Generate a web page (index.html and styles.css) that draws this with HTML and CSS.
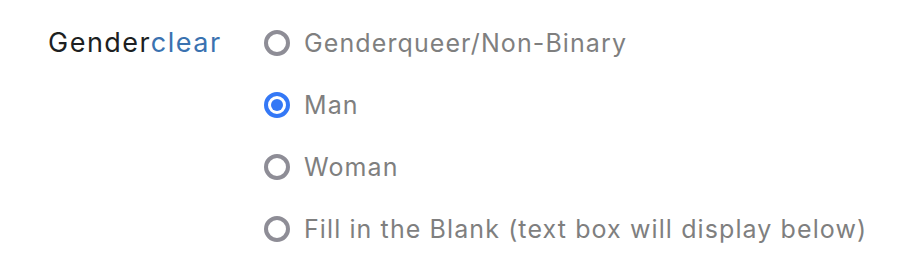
FILE: index.html
```html
<!DOCTYPE html>
<html lang="en">
<head>
    <meta charset="UTF-8">
    <title>Gender</title>
    <link rel="stylesheet" href="styles.css">
</head>
<body>

    <div class="field">
        <div class="field-label">Gender<a class="clear-link" href="#">clear</a></div>
        <div class="options">
            <label class="option">
                <input type="radio" name="gender" value="nb">
                <span class="radio"></span>
                <span class="option-text">Genderqueer/Non-Binary</span>
            </label>
            <label class="option">
                <input type="radio" name="gender" value="man" checked>
                <span class="radio"></span>
                <span class="option-text">Man</span>
            </label>
            <label class="option">
                <input type="radio" name="gender" value="woman">
                <span class="radio"></span>
                <span class="option-text">Woman</span>
            </label>
            <label class="option">
                <input type="radio" name="gender" value="other">
                <span class="radio"></span>
                <span class="option-text">Fill in the Blank (text box will display below)</span>
            </label>
        </div>
    </div>

</body>
</html>
```

FILE: styles.css
```css
body {
    margin: 0;
    padding: 0;
    font-family: Inter, 'Noto Sans', sans-serif;
    background-color: #ffffff;
    color: #1d1d1f;
}

.field {
    display: flex;
    align-items: flex-start;
    padding: 27px 0 0 48px;
}

.field-label {
    font-size: 27px;
    line-height: 32px;
    letter-spacing: 1.5px;
    width: 216px;
    color: #1d1f22;
}

.clear-link {
    color: #3a72b0;
    text-decoration: none;
}

.options {
    display: flex;
    flex-direction: column;
    gap: 30px;
}

.option {
    display: flex;
    align-items: center;
    gap: 14px;
    cursor: pointer;
}

.option input {
    display: none;
}

.radio {
    width: 26px;
    height: 26px;
    box-sizing: border-box;
    border: 4px solid #8e8d96;
    border-radius: 50%;
    position: relative;
    flex-shrink: 0;
}

.option input:checked + .radio {
    border-color: #3478f6;
}

.option input:checked + .radio::after {
    content: '';
    position: absolute;
    top: 3px;
    left: 3px;
    width: 12px;
    height: 12px;
    border-radius: 50%;
    background-color: #3478f6;
}

.option-text {
    font-size: 25px;
    line-height: 32px;
    letter-spacing: 1.1px;
    color: #7f7f7f;
}
```
